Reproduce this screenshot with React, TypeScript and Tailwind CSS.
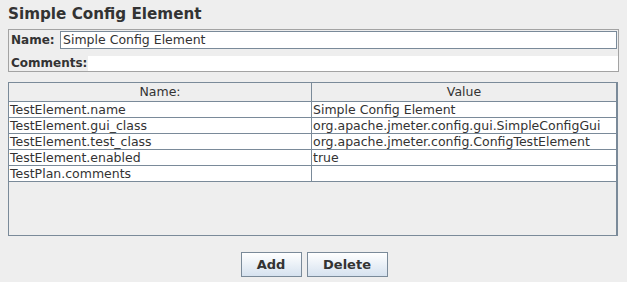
const rows = [
  ["TestElement.name", "Simple Config Element"],
  ["TestElement.gui_class", "org.apache.jmeter.config.gui.SimpleConfigGui"],
  ["TestElement.test_class", "org.apache.jmeter.config.ConfigTestElement"],
  ["TestElement.enabled", "true"],
  ["TestPlan.comments", ""],
];

export default function App() {
  return (
    <div
      className="w-[627px] h-[282px] bg-[#eeeeee] flex flex-col text-[#333333] overflow-hidden"
      style={{ fontFamily: "'DejaVu Sans', sans-serif" }}
    >
      {/* Title */}
      <div className="h-[29px] pl-[8px] pt-[4px] text-[15.2px] font-bold leading-[20px] text-[#333333]">
        Simple Config Element
      </div>

      {/* Name / comments panel */}
      <div className="mx-[8px] w-[611px] h-[43px] border border-[#a3a3a3] flex flex-col">
        <div className="flex items-center h-[20px] pl-[2px] pr-[1px]">
          <span className="text-[12px] font-bold w-[49px]">Name:</span>
          <div className="flex-1 h-[18px] bg-white border border-[#7a8a99] flex items-center pl-[2px] text-[12.5px]">
            Simple Config Element
          </div>
        </div>
        <div className="flex items-end flex-1 pl-[2px]">
          <span className="text-[12px] font-bold w-[77px] leading-[16px]">Comments:</span>
          <div className="flex-1 h-[15px] bg-white" />
        </div>
      </div>

      {/* Property table */}
      <div className="mx-[8px] mt-[10px] w-[610px] h-[154px] border border-[#7a8a99] border-r-2 flex flex-col text-[12.5px]">
        <div className="flex h-[19px] bg-[#eeeeee] border-b border-[#7a8a99] leading-[18px]">
          <div className="w-[303px] text-center border-r border-[#7a8a99]">Name:</div>
          <div className="flex-1 text-center">Value</div>
        </div>
        {rows.map(([k, v]) => (
          <div key={k} className="flex h-[16px] bg-white border-b border-[#7a8a99] leading-[15px]">
            <div className="w-[303px] pl-[1px] border-r border-[#7a8a99] whitespace-nowrap">{k}</div>
            <div className="flex-1 pl-[1px] whitespace-nowrap">{v}</div>
          </div>
        ))}
      </div>

      {/* Buttons */}
      <div className="flex justify-center gap-[5px] mt-[16px] pl-[1px]">
        <button className="w-[61px] h-[25px] border border-[#7a8a99] bg-gradient-to-b from-white to-[#d6e2ef] text-[13px] font-bold text-[#333333]">
          Add
        </button>
        <button className="w-[81px] h-[25px] border border-[#7a8a99] bg-gradient-to-b from-white to-[#d6e2ef] text-[13px] font-bold text-[#333333]">
          Delete
        </button>
      </div>
    </div>
  );
}
